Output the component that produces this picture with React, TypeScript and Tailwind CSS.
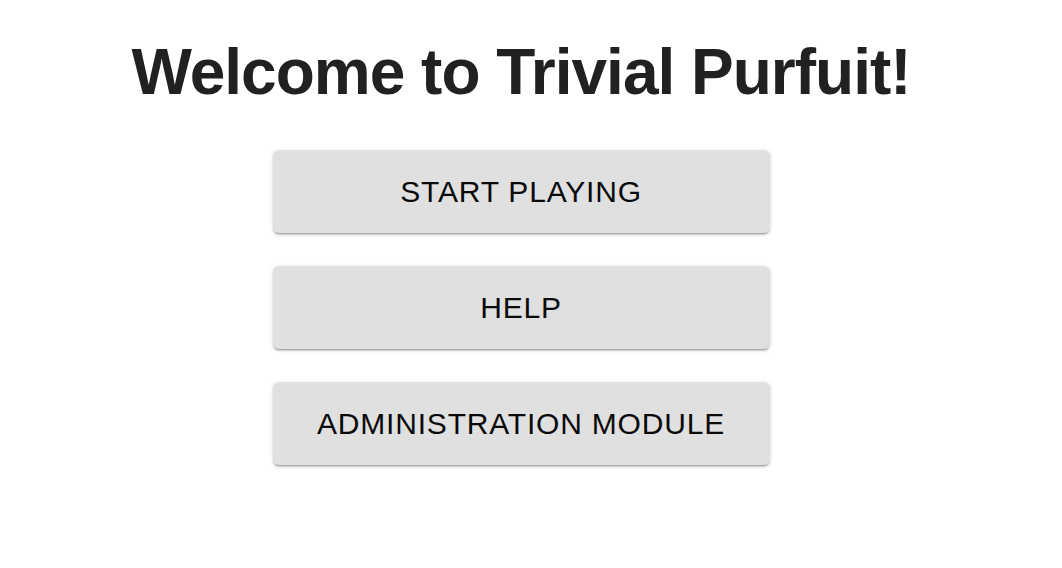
import React from "react";

const buttons = ["START PLAYING", "HELP", "ADMINISTRATION MODULE"];

const App = () => {
  return (
    <div className="w-[1042px] min-h-[568px] bg-white flex flex-col items-center pt-[32px] font-['Liberation_Sans',Arial,sans-serif]">
      <h1 className="text-[64px] leading-[80px] font-bold text-[#212121] tracking-[-1px]">
        Welcome to Trivial Purfuit!
      </h1>
      <div className="flex flex-col gap-[33px] mt-[38px]">
        {buttons.map((label) => (
          <button
            key={label}
            className="w-[497px] h-[83px] rounded-[6px] bg-[#e0e0e0] text-[30px] tracking-[0.8px] text-[#0a0a0a] shadow-[0_3px_1px_-2px_rgba(0,0,0,0.2),0_2px_2px_0_rgba(0,0,0,0.14),0_1px_5px_0_rgba(0,0,0,0.12)]"
          >
            {label}
          </button>
        ))}
      </div>
    </div>
  );
};

export default App;
